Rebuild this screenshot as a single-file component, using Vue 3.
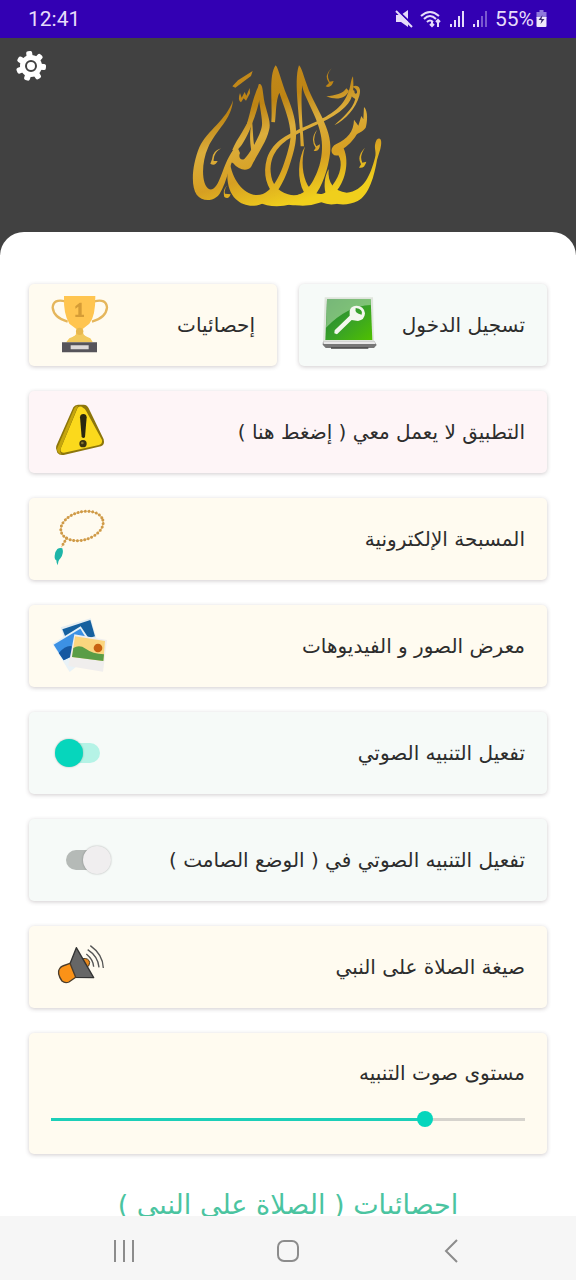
<template>
  <div class="phone">
    <div class="status-bar">
      <span class="clock">12:41</span>
      <div class="status-icons">
        <svg width="18" height="18" viewBox="0 0 18 18" fill="#e6dcfa">
          <path d="M1 5h5l7-5v17l-7-5H1z" />
          <path d="M2 0l16 15" stroke="#3300b3" stroke-width="2" />
          <path d="M1 1l16 16" stroke="#e6dcfa" stroke-width="2" />
        </svg>
        <svg width="22" height="18" viewBox="0 0 22 18" fill="none" stroke="#e6dcfa" stroke-width="2">
          <path d="M1 6q9-8 18 0M4 9q6-6 12 0M7 12q3-3 6 0" />
          <path d="M12 11v5M10 14l2 2 2-2M18 17v-6M16 12l2-2 2 2" />
        </svg>
        <svg width="16" height="18" viewBox="0 0 16 18" fill="#e6dcfa">
          <path d="M1 14h2v3H1zM5 10h2v7H5zM9 6h2v11H9zM13 1h2v16h-2z" />
        </svg>
        <svg width="16" height="18" viewBox="0 0 16 18" fill="#e6dcfa">
          <path d="M1 14h2v3H1zM5 10h2v7H5z" />
          <path d="M9 6h2v11H9zM13 1h2v16h-2z" opacity=".4" />
        </svg>
        <span class="battery">
          55%
          <svg width="13" height="18" viewBox="0 0 12 18">
            <path d="M4 0h4v2h3v6H1V2h3z" fill="#8f78dc" />
            <path d="M1 7h10v9q0 1-1 1H2q-1 0-1-1z" fill="#f1eafc" />
            <path d="M7 5l-4 5h3l-1 4 4-5H6z" fill="#3a2a70" />
          </svg>
        </span>
      </div>
    </div>

    <header class="banner">
      <button class="settings" aria-label="الإعدادات">
        <svg width="30" height="30" viewBox="-15 -15 30 30">
          <g fill="#fff">
            <circle r="11" />
            <rect
              v-for="n in 7"
              :key="n"
              x="-3"
              y="-15"
              width="6"
              height="8"
              rx="2"
              :transform="`rotate(${n * (360 / 7) - 8})`"
            />
          </g>
          <circle r="5" fill="none" stroke="#414141" stroke-width="2" />
        </svg>
      </button>
      <svg class="emblem" viewBox="-5 -3 720 510" role="img" aria-label="رسول الله">
        <defs>
          <linearGradient id="gold" gradientUnits="userSpaceOnUse" x1="200" y1="40" x2="330" y2="470">
            <stop offset="0" stop-color="#c58b1c" />
            <stop offset=".3" stop-color="#bd8414" />
            <stop offset=".5" stop-color="#dcae3c" />
            <stop offset=".75" stop-color="#d69f22" />
            <stop offset="1" stop-color="#f0cf1c" />
          </linearGradient>
        </defs>
        <g fill="url(#gold)">
          <path d="M190 148C186 206 140 236 115 290C95 334 94 402 119 415C148 422 157 350 181 312C198 284 216 262 222 246C240 206 244 150 269 99C278 106 274 126 269 148C258 200 238 244 205 294C178 338 174 390 150 428C134 452 98 454 81 431C62 404 68 340 89 289C113 238 170 208 190 148Z" />
          <path d="M267 100C276 94 279 112 281 132C285 174 307 208 298 238C290 274 258 318 244 348C232 362 208 358 190 336L176 330L204 290L211 306C205 318 213 330 224 324C244 302 275 248 277 222C279 192 263 148 267 100Z" />
          <path d="M244 190C230 230 204 260 188 296C196 306 212 290 222 272C242 240 249 218 244 190ZM247 208C237 250 242 284 247 310L257 298C249 270 251 240 247 208Z" />
          <path d="M318 43C327 52 334 92 352 134C380 202 388 248 369 312C354 366 336 408 313 432C282 470 230 475 198 444C174 420 166 376 180 330C186 382 220 431 260 432C312 434 342 354 360 278C370 229 348 182 329 125C318 151 320 180 316 214L305 213C309 150 296 74 318 43Z" />
          <path d="M388 43C398 52 406 94 424 132C456 200 494 252 479 322C470 374 449 425 424 446C396 471 350 468 320 440C291 411 278 370 292 322C311 266 360 248 405 227C465 201 515 178 534 128C544 108 542 88 550 76C552 108 555 142 526 168C486 208 422 226 376 253C330 277 300 311 303 363C306 401 325 421 355 430C402 446 432 397 449 344C470 273 447 220 425 173C410 140 399 120 398 103C392 146 399 226 403 286L393 286C393 208 370 91 388 43Z" />
          <path d="M406 286C393 332 399 374 414 403C438 438 466 438 489 402C513 372 520 334 506 313C481 318 479 288 500 279C533 264 552 242 553 206L566 224L575 195L581 205L583 168C596 180 593 214 588 230C578 244 565 245 560 252C550 270 532 286 522 292C542 338 522 397 500 421C468 459 423 458 403 424C382 387 384 323 406 286Z" />
          <path d="M477 354C473 396 493 421 531 425C583 419 602 373 616 320C622 298 609 290 621 266C634 256 638 271 632 294L622 327C614 373 599 432 564 450C530 467 486 463 472 439C460 410 464 377 477 354Z" />
          <path d="M300 428Q350 446 405 426Q450 445 482 426L520 450Q490 468 455 454Q408 471 365 460Q306 475 266 452Z" />
          <path d="M188 106L205 88L249 60L244 75L197 110ZM211 126L216 140L225 123L230 134L240 111L241 127L229 149L222 142L214 154Q203 148 211 126Z" />
          <path d="M486 52Q467 72 480 92L492 90Q484 113 468 106L478 96Q461 74 486 52Z" />
          <path d="M470 136C495 134 521 128 530 112L538 120C526 144 500 148 470 136ZM548 107C566 99 576 112 569 134C559 170 528 206 494 223C519 199 548 177 557 144Q538 137 544 114L554 119Q554 132 562 126Q564 114 548 107Z" />
          <path d="M442 236Q426 267 440 286L451 280Q450 304 432 299L438 291Q420 264 442 236ZM586 290Q568 316 578 335L590 332Q584 354 568 350L574 340Q560 315 586 290ZM154 292Q130 307 132 330L144 330Q136 347 122 338L127 325Q128 300 154 292ZM173 403Q162 416 166 428L183 430Q177 447 164 438Q158 416 173 403Z" />
        </g>
      </svg>
    </header>

    <main class="sheet">
      <div class="card-pair">
        <button class="card mint">
          <span>تسجيل الدخول</span>
          <svg class="icon" viewBox="90 78 174 174">
            <defs>
              <linearGradient id="screen" x1="0" y1="0" x2="1" y2="1">
                <stop offset="0" stop-color="#1c7d2c" />
                <stop offset=".5" stop-color="#37a02a" />
                <stop offset="1" stop-color="#4fc000" />
              </linearGradient>
            </defs>
            <path d="M101 82h145l3 134H96z" fill="#dfe5dc" />
            <path d="M108 88h131l5 122H103z" fill="url(#screen)" />
            <path d="M108 88h131v17q-70 2-134 68z" fill="#a8d6a2" opacity=".65" />
            <path d="M96 214h154l7 11-8 9H104l-9-10z" fill="#777" />
            <path d="M96 214h154l4 8H98z" fill="#e8e8e8" />
            <path d="M120 234h112" stroke="#444" stroke-width="4" />
            <path d="M176 123q2-15 20-16 23 0 26 23-1 20-21 23l-19-3-44 43-8-3 1-9 45-44zM194 114q-4 17 18 20 5-17-18-20z" fill="#f3f7ee" fill-rule="evenodd" />
          </svg>
        </button>
        <button class="card cream">
          <span>إحصائيات</span>
          <svg class="icon" viewBox="90 78 174 174">
            <path d="M133 94q-36-9-38 19 3 30 45 42M220 94q36-9 38 19-3 30-45 42" fill="none" stroke="#e5b65c" stroke-width="7" />
            <path d="M129 78h94q1 60-18 83l-21 17 4 17 25 22h-76l27-22 3-17-22-17q-18-28-16-83z" fill="#ffc550" />
            <path d="M145 205q20-8 26-17h12q6 9 25 17l7 11h-79z" fill="#f2c95c" />
            <circle cx="176" cy="184" r="11" fill="#e7b84e" />
            <path d="M163 109l13-11h6v36h7v7h-26v-7h9v-24l-9 6z" fill="#d59c36" />
            <path d="M123 217h105v30H123z" fill="#56545a" />
            <path d="M149 226h54v12h-54z" fill="#ddd9d8" />
          </svg>
        </button>
      </div>

      <button class="card pink">
        <span>التطبيق لا يعمل معي ( إضغط هنا )</span>
        <svg class="icon" viewBox="90 69 174 174">
          <path d="M157 82q5-9 16-8h15q11 1 15 11l45 93q4 17-8 21l-112 26q-13 2-19-7l-4-13q0-7 3-12z" fill="#8d760b" />
          <path d="M170 83q8-7 17 1 5 2 8 8l48 88q2 12-9 15l-105 23q-12 0-10-12z" fill="#fbd91c" />
          <path d="M160 85q5-8 11-7l-53 130q-2 8 3 14-13-3-13-16z" fill="#c5a50d" />
          <path d="M177 112q1-10 10-10t10 10l-5 59q-4 6-10 0z" fill="#2a2710" />
          <circle cx="186" cy="191" r="11" fill="#3a3310" />
          <circle cx="184" cy="189" r="4" fill="#85742a" />
        </svg>
      </button>

      <button class="card cream">
        <span>المسبحة الإلكترونية</span>
        <svg class="icon" viewBox="90 390 174 174">
          <g fill="none" stroke="#e8c583" stroke-width="3">
            <ellipse cx="183" cy="438" rx="65" ry="42" transform="rotate(-16 183 438)" />
            <path d="M137 474l-16 28" />
          </g>
          <g fill="none" stroke="#cf9a48" stroke-width="9" stroke-linecap="round" stroke-dasharray="0 11">
            <ellipse cx="183" cy="438" rx="65" ry="42" transform="rotate(-16 183 438)" />
            <path d="M137 474l-16 28" />
          </g>
          <path d="M109 507q7-5 15-2 5 15-5 29-9 9-8 22-5-5-5-15-6-3-5-14 1-13 8-20z" fill="#1fb5a8" />
        </svg>
      </button>

      <button class="card cream">
        <span>معرض الصور و الفيديوهات</span>
        <svg class="icon" viewBox="90 51 174 174">
          <path d="M119 82l90-27 17 58-86 40z" fill="#e4edf2" />
          <path d="M124 88l84-28 14 49-80 24z" fill="#15609f" />
          <path d="M94 131l85-52 48 72-81 65z" fill="#e8f2f7" />
          <path d="M98 134l80-48 32 52-82 43z" fill="#3c91e4" />
          <path d="M113 159q21-24 38-21l11 27-34 16z" fill="#1658a1" />
          <path d="M160 103l98 17-12 95-104-17z" fill="#f0eeed" />
          <path d="M162 109l90 14-5 60-94-12z" fill="#fbd57e" />
          <circle cx="231" cy="144" r="13" fill="#c86210" />
          <path d="M157 144q18-11 37 2 20 15 55 17l-2 20-94-12z" fill="#5a9d46" />
        </svg>
      </button>

      <label class="card mint">
        <span>تفعيل التنبيه الصوتي</span>
        <span class="switch-slot"><input v-model="soundAlert" type="checkbox" class="switch" /></span>
      </label>

      <label class="card mint">
        <span>تفعيل التنبيه الصوتي في ( الوضع الصامت )</span>
        <span class="switch-slot"><input v-model="silentAlert" type="checkbox" class="switch" /></span>
      </label>

      <button class="card cream">
        <span>صيغة الصلاة على النبي</span>
        <svg class="icon" viewBox="90 384 174 174">
          <path d="M184 446q20-3 22 12 0 12-12 15z" fill="#e8881c" stroke="#4a3c24" stroke-width="3" />
          <path d="M166 413l52 90-62-1-9-41z" fill="#666" stroke="#333" stroke-width="4" stroke-linejoin="round" />
          <path d="M147 460l17 42-20 14q-12 5-21-3-16-23-8-36 4-7 10-9z" fill="#fb9217" stroke="#4b3d2c" stroke-width="4" />
          <path d="M196 432q21 17 22 38M200 419q31 20 34 53M208 407q38 27 39 67" fill="none" stroke="#555" stroke-width="4" />
        </svg>
      </button>

      <div class="card volume-card cream">
        <label for="volume">مستوى صوت التنبيه</label>
        <input
          id="volume"
          v-model.number="volume"
          class="slider"
          type="range"
          min="0"
          max="100"
          :style="{ '--fill': volume + '%' }"
        />
      </div>

      <h2 class="stats-title">احصائيات ( الصلاة على النبي )</h2>
    </main>

    <nav class="nav-bar">
      <button aria-label="التطبيقات الأخيرة">
        <svg width="24" height="24" viewBox="0 0 24 24"><path d="M3 1v22M12 1v22M21 1v22" /></svg>
      </button>
      <button aria-label="الرئيسية">
        <svg width="24" height="24" viewBox="0 0 24 24"><rect x="2" y="2" width="20" height="20" rx="6" /></svg>
      </button>
      <button aria-label="رجوع">
        <svg width="24" height="24" viewBox="0 0 24 24"><path d="M17 1L6 12l11 11" /></svg>
      </button>
    </nav>
  </div>
</template>

<script setup>
import { ref } from 'vue'

const soundAlert = ref(true)
const silentAlert = ref(false)
const volume = ref(80)
</script>

<style>
body {
  margin: 0;
}
</style>

<style scoped>
.phone {
  display: flex;
  flex-direction: column;
  height: 100vh;
  overflow: hidden;
  background: #414141;
  color: #2d2d2d;
  font-family: "DejaVu Sans", sans-serif;
}

button {
  margin: 0;
  padding: 0;
  border: none;
  background: none;
  color: inherit;
  font: inherit;
  cursor: pointer;
}

svg {
  display: block;
  flex-shrink: 0;
}

.status-bar {
  display: flex;
  justify-content: space-between;
  align-items: center;
  flex-shrink: 0;
  height: 38px;
  padding: 0 28px;
  background: #3300b3;
  color: #e6dcfa;
  font-family: Roboto, sans-serif;
  font-size: 21px;
}

.status-icons {
  display: flex;
  align-items: center;
  gap: 7px;
}

.battery {
  display: flex;
  align-items: center;
  gap: 1px;
}

.banner {
  display: grid;
  grid-template-columns: 48px 1fr 48px;
  flex-shrink: 0;
  padding: 12px 0;
}

.settings {
  justify-self: end;
  align-self: start;
  width: 32px;
  height: 32px;
}

.emblem {
  justify-self: center;
  width: 240px;
  height: 170px;
}

.sheet {
  display: flex;
  flex-direction: column;
  flex: 1;
  gap: 25px;
  min-height: 0;
  padding: 52px 29px 0;
  overflow: hidden;
  box-sizing: border-box;
  border-radius: 24px 24px 0 0;
  background: #fff;
  direction: rtl;
}

.card-pair {
  display: grid;
  grid-template-columns: 1fr 1fr;
  flex-shrink: 0;
  gap: 22px;
}

.card {
  display: flex;
  justify-content: space-between;
  align-items: center;
  flex-shrink: 0;
  height: 82px;
  padding: 0 22px;
  border-radius: 5px;
  box-shadow: 0 1px 4px rgba(60, 40, 50, 0.24);
  font-size: 20px;
  white-space: nowrap;
  cursor: pointer;
}

.card.mint {
  background: #f6faf8;
}

.card.cream {
  background: #fffbf0;
}

.card.pink {
  background: #fef5f7;
}

.icon {
  width: 58px;
  height: 58px;
  overflow: visible;
}

.switch-slot {
  padding: 0 4px;
}

.switch {
  display: grid;
  align-items: center;
  width: 56px;
  height: 30px;
  margin: 0;
  appearance: none;
  cursor: pointer;
}

.switch::before,
.switch::after {
  content: "";
  grid-area: 1 / 1;
}

.switch::before {
  justify-self: center;
  width: 34px;
  height: 20px;
  border-radius: 10px;
  background: #b5bab7;
}

.switch::after {
  justify-self: start;
  width: 28px;
  height: 28px;
  border-radius: 50%;
  background: #f0eeef;
  box-shadow: 0 0 2px rgba(0, 0, 0, 0.3);
}

.switch:checked::before {
  background: #b5f3e6;
}

.switch:checked::after {
  justify-self: end;
  background: #06d6bc;
}

.volume-card {
  flex-direction: column;
  justify-content: flex-start;
  align-items: stretch;
  gap: 25px;
  height: auto;
  padding: 28px 22px 26px;
}

.volume-card label {
  line-height: 24px;
}

.slider {
  width: 100%;
  height: 18px;
  margin: 0;
  appearance: none;
  background: linear-gradient(to right, #1ccfb8 var(--fill), #d6d3cd var(--fill)) center / 100% 3px no-repeat;
  direction: ltr;
  cursor: pointer;
}

.slider::-webkit-slider-thumb {
  width: 16px;
  height: 16px;
  appearance: none;
  border-radius: 50%;
  background: #06d6bc;
}

.stats-title {
  flex-shrink: 0;
  margin: 0;
  padding-top: 8px;
  color: #4bc4a0;
  font-size: 27px;
  font-weight: 400;
  line-height: 36px;
  text-align: center;
  white-space: nowrap;
}

.nav-bar {
  display: grid;
  grid-template-columns: repeat(3, 164px);
  justify-content: center;
  align-items: center;
  flex-shrink: 0;
  box-sizing: border-box;
  height: 64px;
  padding-top: 6px;
  background: #f6f6f6;
}

.nav-bar button {
  display: flex;
  justify-content: center;
  align-items: center;
  height: 48px;
}

.nav-bar svg {
  fill: none;
  stroke: #8c8c8c;
  stroke-width: 2;
}
</style>
